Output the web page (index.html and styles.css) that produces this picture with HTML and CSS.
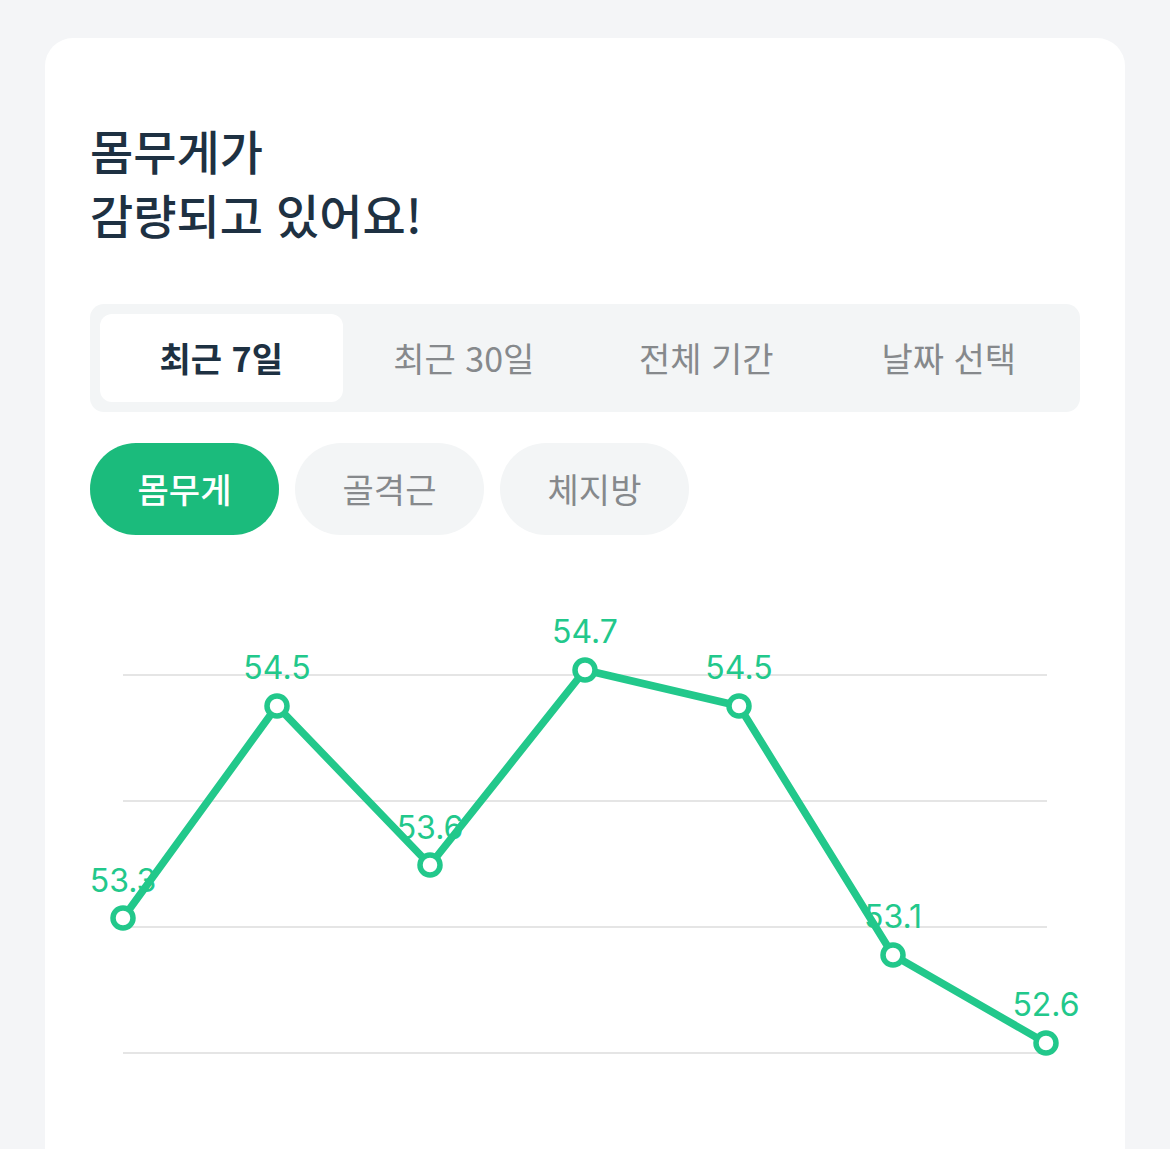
FILE: index.html
```html
<!DOCTYPE html>
<html lang="ko">
<head>
  <meta charset="UTF-8">
  <meta name="viewport" content="width=device-width, initial-scale=1.0">
  <title>체중 변화</title>
  <link rel="stylesheet" href="styles.css">
</head>
<body>
  <main class="card">
    <h1 class="title">몸무게가<br>감량되고 있어요!</h1>

    <div class="period-tabs">
      <button class="tab active">최근 7일</button>
      <button class="tab">최근 30일</button>
      <button class="tab">전체 기간</button>
      <button class="tab">날짜 선택</button>
    </div>

    <div class="metric-pills">
      <button class="pill active">몸무게</button>
      <button class="pill">골격근</button>
      <button class="pill">체지방</button>
    </div>

    <!-- Weight chart -->
    <svg class="chart" width="990" height="560" viewBox="0 0 990 560">
      <g class="grid">
        <line x1="33" y1="75" x2="957" y2="75"></line>
        <line x1="33" y1="201" x2="957" y2="201"></line>
        <line x1="33" y1="327" x2="957" y2="327"></line>
        <line x1="33" y1="453" x2="957" y2="453"></line>
      </g>
      <g class="labels">
        <text x="33" y="292">53.3</text>
        <text x="187" y="79">54.5</text>
        <text x="340" y="239">53.6</text>
        <text x="495" y="43">54.7</text>
        <text x="649" y="79">54.5</text>
        <text x="803" y="328">53.1</text>
        <text x="956" y="416">52.6</text>
      </g>
      <polyline class="line" points="33,318 187,106 340,265 495,70 649,106 803,355 956,443"></polyline>
      <g class="dots">
        <circle cx="33" cy="318" r="10"></circle>
        <circle cx="187" cy="106" r="10"></circle>
        <circle cx="340" cy="265" r="10"></circle>
        <circle cx="495" cy="70" r="10"></circle>
        <circle cx="649" cy="106" r="10"></circle>
        <circle cx="803" cy="355" r="10"></circle>
        <circle cx="956" cy="443" r="10"></circle>
      </g>
    </svg>
  </main>
</body>
</html>
```

FILE: styles.css
```css
body {
  margin: 0;
  background: #f4f5f7;
  font-family: 'Noto Sans CJK KR', 'Noto Sans', sans-serif;
  overflow: hidden;
}

.card {
  background: white;
  margin: 38px 45px 0;
  padding: 80px 45px 0;
  border-radius: 28px 28px 0 0;
  height: 1200px;
}

.title {
  margin: 0;
  font-size: 47px;
  font-weight: 500;
  line-height: 64px;
  color: #1e3142;
}

.period-tabs {
  display: grid;
  grid-template-columns: repeat(4, 1fr);
  margin-top: 58px;
  padding: 10px;
  background: #f3f5f6;
  border-radius: 14px;
}

.tab {
  height: 88px;
  border: none;
  background: none;
  border-radius: 12px;
  font-family: inherit;
  font-size: 34px;
  line-height: 1;
  color: #86898c;
  cursor: pointer;
}

.tab.active {
  background: white;
  color: #1e3142;
  font-weight: 700;
}

.metric-pills {
  display: flex;
  gap: 16px;
  margin-top: 31px;
}

.pill {
  width: 189px;
  height: 92px;
  border: none;
  border-radius: 46px;
  background: #f3f5f6;
  font-family: inherit;
  font-size: 34px;
  line-height: 1;
  color: #86898c;
  cursor: pointer;
}

.pill.active {
  background: #1bbb7c;
  color: white;
  font-weight: 500;
}

.chart {
  display: block;
  margin-top: 65px;
}

.grid line {
  stroke: #dcdcdc;
  stroke-width: 1.5;
}

.labels text {
  fill: #22c88b;
  font-family: Inter, 'Noto Sans', sans-serif;
  font-size: 32px;
  text-anchor: middle;
}

.line {
  fill: none;
  stroke: #22c88b;
  stroke-width: 7.5;
  stroke-linejoin: round;
}

.dots circle {
  fill: white;
  stroke: #22c88b;
  stroke-width: 5.5;
}
```
